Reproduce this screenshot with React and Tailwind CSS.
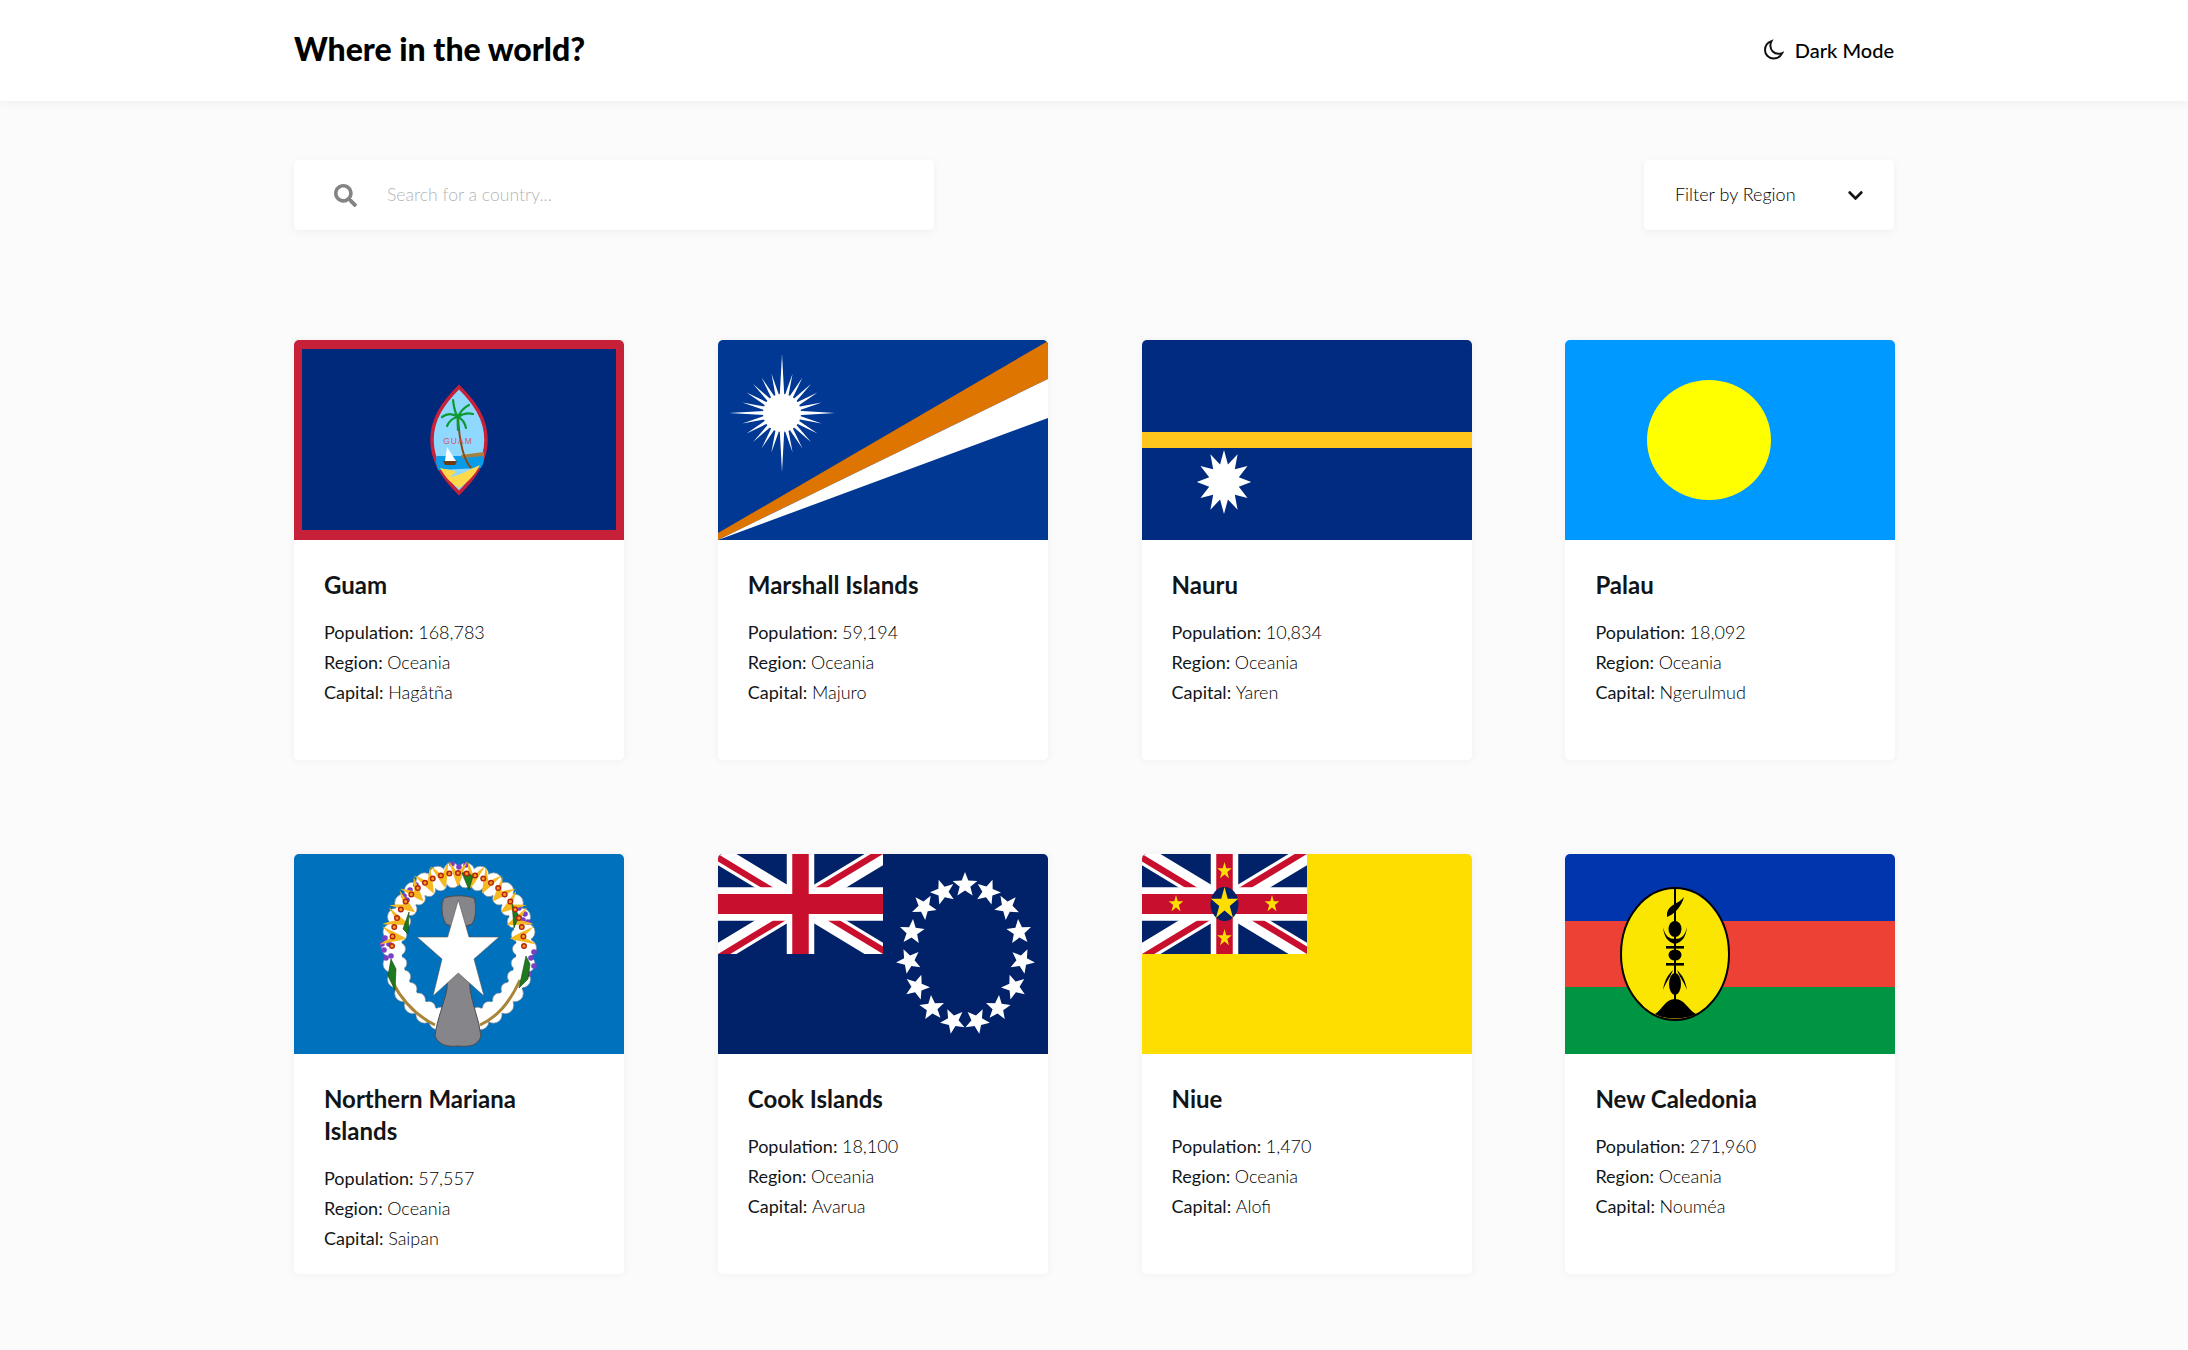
import { FaSearch, FaChevronDown } from 'react-icons/fa';

// star polygon helper: n points, outer/inner radius, optional x stretch
const starPoints = (cx, cy, n, outer, inner, sx = 1, sy = 1, rot = 0) => {
  const pts = [];
  for (let i = 0; i < n * 2; i++) {
    const r = i % 2 === 0 ? outer : inner;
    const a = (Math.PI * i) / n - Math.PI / 2 + rot;
    pts.push(`${(cx + Math.cos(a) * r * sx).toFixed(2)},${(cy + Math.sin(a) * r * sy).toFixed(2)}`);
  }
  return pts.join(' ');
};

const FlagSvg = ({ children }) => (
  <svg viewBox="0 0 330 200" preserveAspectRatio="none" className="block w-full h-[200px] rounded-t-[5px]">
    {children}
  </svg>
);

const Guam = () => (
  <FlagSvg>
    <rect width="330" height="200" fill="#C62139" />
    <rect x="8" y="9" width="314" height="181" fill="#00297B" />
    <path d="M165 47 C180 62 192 78 192 100 C192 122 180 138 165 153 C150 138 138 122 138 100 C138 78 150 62 165 47Z" fill="#8FD8FF" stroke="#C62139" strokeWidth="3.5" />
    <path d="M143 116 L190 116 C190 122 189 124 187 128 L144 130 C142 124 141 120 143 116Z" fill="#0A9BE8" />
    <path d="M167 115 L190 112 L190 116 L168 118Z" fill="#A6803F" />
    <path d="M146 128 C152 130 158 129 162 132 L156 137 C165 136 172 131 186 125 C181 135 174 142 165 148 C155 142 150 135 146 128Z" fill="#FDD94B" />
    <path d="M164 77 C165 95 168 118 177 128" fill="none" stroke="#8A4B12" strokeWidth="2" />
    <path d="M164 77 C160 72 160 66 159 60 M164 77 C167 70 171 67 175 65 M164 77 C170 73 175 73 179 74 M164 77 C158 73 152 74 148 77 M164 77 C159 78 155 81 153 86 M164 77 C168 79 171 83 172 88 M164 77 C163 81 164 85 164 90" fill="none" stroke="#0E9A30" strokeWidth="2.2" strokeLinecap="round" />
    <text x="164" y="104" textAnchor="middle" fontSize="8.5" fill="#D8546C" letterSpacing="1" fontFamily="Liberation Sans, sans-serif">GUAM</text>
    <path d="M153 107 L162 121 L151 121Z" fill="#fff" />
    <path d="M149 121 L163 121 L161 125 L151 125Z" fill="#6D3A12" />
  </FlagSvg>
);

const marshallRays = Array.from({ length: 24 }, (_, i) => i);

const Marshall = () => (
  <FlagSvg>
    <rect width="330" height="200" fill="#003893" />
    <path d="M0 193 L330 1 L330 39 L0 200Z" fill="#DD7500" />
    <path d="M0 200 L330 39 L330 78Z" fill="#fff" />
    {marshallRays.map((i) => {
      const a = (i * Math.PI) / 12;
      let len = 41;
      if (i === 0 || i === 12) len = 59;
      if (i === 6 || i === 18) len = 53;
      const w = 3.2;
      const cx = 64;
      const cy = 73;
      const tx = cx + Math.sin(a) * len;
      const ty = cy - Math.cos(a) * len;
      const bx = Math.cos(a) * w;
      const by = Math.sin(a) * w;
      return <polygon key={i} points={`${cx + bx},${cy + by} ${tx},${ty} ${cx - bx},${cy - by}`} fill="#fff" />;
    })}
    <circle cx="64" cy="73" r="19" fill="#fff" />
  </FlagSvg>
);

const Nauru = () => (
  <FlagSvg>
    <rect width="330" height="200" fill="#002B7F" />
    <rect y="92" width="330" height="16" fill="#FFC61E" />
    <polygon points={starPoints(82, 142, 12, 32, 18, 0.85, 1)} fill="#fff" />
  </FlagSvg>
);

const Palau = () => (
  <FlagSvg>
    <rect width="330" height="200" fill="#0099FF" />
    <ellipse cx="144" cy="100" rx="62" ry="60" fill="#FFFF00" />
  </FlagSvg>
);

const wreathDots = Array.from({ length: 30 }, (_, i) => i);
const beadDots = Array.from({ length: 25 }, (_, i) => i);
const petals = Array.from({ length: 13 }, (_, i) => i);

const Mariana = () => (
  <FlagSvg>
    <rect width="330" height="200" fill="#0071BC" />
    {/* white scalloped wreath */}
    {wreathDots.map((i) => {
      const a = (i / 30) * Math.PI * 2;
      return (
        <g key={i}>
          <circle cx={165 + Math.cos(a) * 69} cy={94 + Math.sin(a) * 77} r="8.5" fill="#fff" stroke="#8a949c" strokeWidth="0.7" />
          <circle cx={165 + Math.cos(a) * 60} cy={95 + Math.sin(a) * 68} r="6.5" fill="#fff" stroke="#8a949c" strokeWidth="0.7" />
        </g>
      );
    })}
    <ellipse cx="165" cy="94" rx="65" ry="73" fill="none" stroke="#fff" strokeWidth="15" />
    {/* rope along the bottom */}
    <path d="M99 129 C110 150 125 163 141 171 M226 126 C215 150 203 163 186 171" fill="none" stroke="#A9853A" strokeWidth="3" />
    {/* purple flowers */}
    {[[91, 84], [95, 90], [90, 96], [97, 102], [92, 104], [88, 90], [110, 42], [116, 36], [122, 31], [113, 46], [158, 10], [165, 13], [172, 11], [225, 54], [231, 60], [234, 68], [229, 66], [237, 104], [240, 112], [235, 120], [240, 98]].map(([x, y], i) => (
      <circle key={i} cx={x} cy={y} r="2.8" fill="#7B3FC4" />
    ))}
    {/* yellow petals */}
    {petals.map((i) => {
      const t = Math.PI * 1.04 + (i / 12) * Math.PI * 0.92;
      const x = 164 + Math.cos(t) * 66;
      const y = 92 + Math.sin(t) * 73;
      const deg = (t * 180) / Math.PI + 90;
      return (
        <path
          key={i}
          transform={`translate(${x} ${y}) rotate(${deg}) scale(1.15)`}
          d="M-8 -10 C-4 -6 -2 -2 0 0 C2 -2 4 -6 8 -10 C5 -2 3 6 0 12 C-3 6 -5 -2 -8 -10Z"
          fill="#F6B921"
        />
      );
    })}
    {/* leaves */}
    <path d="M97 105 L94 122 L101 136 L102 115Z M232 102 L225 134 L234 125 L236 110Z M115 58 L109 75 L114 80Z M218 50 L220 74 L225 62Z M168 19 L175 36 L179 22 L172 18Z" fill="#1E7A1E" stroke="#0E4A0E" strokeWidth="0.6" />
    {/* red beads */}
    {beadDots.map((i) => {
      const t = Math.PI + (i / 24) * Math.PI;
      return <circle key={i} cx={164 + Math.cos(t) * 66} cy={92 + Math.sin(t) * 73} r="2.3" fill="#F39A1E" stroke="#B3230F" strokeWidth="1.4" />;
    })}
    {/* latte stone */}
    <path d="M150 44 C147 50 147 62 152 70 L157 72 L155 85 L153 135 C150 150 143 165 141 182 C145 192 155 193 164 192 C175 193 184 192 187 182 C185 165 178 150 176 135 L174 85 L172 72 L178 70 C183 62 182 50 180 44 C170 41 160 41 150 44Z" fill="#86868A" stroke="#4d4d50" strokeWidth="1" />
    {/* star */}
    <polygon points="164.3,46 175,83 205,83 180,105 190,142 164.3,119 139,142 148,105 123,83 153.7,83" fill="#fff" stroke="#555" strokeWidth="0.6" />
  </FlagSvg>
);

// Union Jack, drawn in 60x30 units and stretched into the 165x100 canton
const UnionJack = ({ clipId }) => (
  <svg x="0" y="0" width="165" height="100" viewBox="0 0 60 30" preserveAspectRatio="none">
    <defs>
      <clipPath id={clipId}>
        <path d="M30 15 H60 V30 Z V30 H0 Z H0 V0 Z V0 H60 Z" />
      </clipPath>
    </defs>
    <rect width="60" height="30" fill="#012169" />
    <path d="M0 0 L60 30 M60 0 L0 30" stroke="#fff" strokeWidth="6" />
    <path d="M0 0 L60 30 M60 0 L0 30" stroke="#C8102E" strokeWidth="4" clipPath={`url(#${clipId})`} />
    <path d="M30 0 V30 M0 15 H60" stroke="#fff" strokeWidth="10" />
    <path d="M30 0 V30 M0 15 H60" stroke="#C8102E" strokeWidth="6" />
  </svg>
);

const cookStars = [
  [247, 31], [225, 38], [270, 38], [206, 53], [289, 53], [194, 78], [301, 78], [191, 107],
  [304, 107], [199, 133], [296, 133], [214, 154], [280, 154], [235, 167], [259, 167],
];

const Cook = () => (
  <FlagSvg>
    <rect width="330" height="200" fill="#012169" />
    <UnionJack clipId="cook-jack" />
    {cookStars.map(([x, y], i) => {
      const rot = Math.atan2(x - 247, 100 - y);
      return <polygon key={i} points={starPoints(x, y, 5, 13, 5.6, 1, 1, rot)} fill="#fff" />;
    })}
  </FlagSvg>
);

const Niue = () => (
  <FlagSvg>
    <rect width="330" height="200" fill="#FEDD00" />
    <UnionJack clipId="niue-jack" />
    <ellipse cx="82.5" cy="50" rx="14" ry="17" fill="#012169" />
    <polygon points={starPoints(82.5, 50, 5, 17, 6.5, 0.85, 1)} fill="#FEDD00" />
    {[[82.5, 17], [34, 50], [130, 50], [82.5, 84]].map(([x, y], i) => (
      <polygon key={i} points={starPoints(x, y, 5, 9, 3.5, 0.85, 1)} fill="#FEDD00" />
    ))}
  </FlagSvg>
);

const Caledonia = () => (
  <FlagSvg>
    <rect width="330" height="67" fill="#0035AD" />
    <rect y="67" width="330" height="67" fill="#ED4135" />
    <rect y="133" width="330" height="67" fill="#009543" />
    <ellipse cx="110" cy="100" rx="54" ry="66" fill="#FAE600" stroke="#000" strokeWidth="2" />
    {/* fleche faitiere */}
    <path d="M110 34 V150" stroke="#000" strokeWidth="2" />
    <path d="M119 43 C114 50 104 50 102 59 L102 63 C109 60 116 54 119 43Z" fill="#000" />
    <ellipse cx="110" cy="75" rx="6.5" ry="8" fill="#000" />
    <path d="M98 73 C100 82 104 85 110 85 C116 85 120 82 122 73 C121 82 118 88 110 90 C102 88 99 82 98 73Z" fill="#000" />
    <rect x="101" y="92" width="18" height="2.6" fill="#000" />
    <ellipse cx="110" cy="101" rx="6.5" ry="5.5" fill="#000" />
    <rect x="101" y="109" width="18" height="2.6" fill="#000" />
    <ellipse cx="110" cy="130" rx="6" ry="11" fill="#000" />
    <path d="M98 136 C100 124 104 120 108 116 C105 124 102 126 98 136Z M122 136 C120 124 116 120 112 116 C115 124 118 126 122 136Z" fill="#000" />
    <path d="M90 160 C98 155 100 145 110 145 C120 145 122 155 131 160 C122 166 98 166 90 160Z" fill="#000" />
  </FlagSvg>
);

const countries = [
  { name: 'Guam', population: '168,783', capital: 'Hagåtña', Flag: Guam },
  { name: 'Marshall Islands', population: '59,194', capital: 'Majuro', Flag: Marshall },
  { name: 'Nauru', population: '10,834', capital: 'Yaren', Flag: Nauru },
  { name: 'Palau', population: '18,092', capital: 'Ngerulmud', Flag: Palau },
  { name: 'Northern Mariana Islands', population: '57,557', capital: 'Saipan', Flag: Mariana },
  { name: 'Cook Islands', population: '18,100', capital: 'Avarua', Flag: Cook },
  { name: 'Niue', population: '1,470', capital: 'Alofi', Flag: Niue },
  { name: 'New Caledonia', population: '271,960', capital: 'Nouméa', Flag: Caledonia },
];

const Detail = ({ label, value }) => (
  <p className="h-[30px] leading-[30px] text-[18px] font-normal text-[#111517]">
    {label}: <span className="font-light text-black">{value}</span>
  </p>
);

const CountryCard = ({ country }) => {
  const { Flag } = country;
  return (
    <article className="w-[330px] h-[420px] bg-white rounded-[5px] shadow-[0_0_7px_2px_rgba(0,0,0,0.03)]">
      <Flag />
      <div className="pt-[29px] px-[30px] pb-5">
        <h2 className="text-[24px] leading-8 font-bold text-[#111517]">{country.name}</h2>
        <div className="mt-4">
          <Detail label="Population" value={country.population} />
          <Detail label="Region" value="Oceania" />
          <Detail label="Capital" value={country.capital} />
        </div>
      </div>
    </article>
  );
};

export default function App() {
  return (
    <div className="min-h-screen bg-[#fbfbfb] font-['Lato',sans-serif] text-[#111517]">
      <header className="h-[101px] bg-white shadow-[0_2px_9px_rgba(0,0,0,0.05)]">
        <div className="w-[1600px] h-full mx-auto flex items-center justify-between">
          <h1 className="text-[32px] font-black text-black pb-[3px]">Where in the world?</h1>
          <button className="flex items-center gap-[11px] text-[20px] font-medium text-black pb-[2px]">
            <svg width="20" height="21" viewBox="0 0 20 20" fill="none" stroke="#111" strokeWidth="2">
              <path d="M7.5 1.6 C3.8 3 1 6.3 1 10.4 C1 15.3 4.9 19 9.6 19 C13.4 19 16.6 16.8 18.2 13.6 C17 14.1 15.8 14.3 14.5 14.3 C10 14.3 6.4 10.8 6.4 6.2 C6.4 4.6 6.8 3 7.5 1.6Z" />
            </svg>
            Dark Mode
          </button>
        </div>
      </header>

      <main className="w-[1600px] mx-auto pt-[59px] pb-[76px]">
        <div className="flex justify-between">
          <label className="w-[640px] h-[70px] bg-white rounded-[5px] shadow-[0_2px_9px_rgba(0,0,0,0.05)] flex items-center pl-10">
            <FaSearch className="w-[23px] h-[23px] text-[#848484]" />
            <input
              placeholder="Search for a country..."
              className="ml-[30px] flex-1 outline-none text-[17.6px] font-light placeholder:text-[#b5b5b5]"
            />
          </label>
          <div className="w-[250px] h-[70px] bg-white rounded-[5px] shadow-[0_2px_9px_rgba(0,0,0,0.05)] flex items-center justify-between pl-[31px] pr-[30px]">
            <span className="text-[18px] font-light text-black pb-px">Filter by Region</span>
            <FaChevronDown className="w-[17px] h-[17px] text-[#111517]" />
          </div>
        </div>

        <div className="mt-[110px] grid grid-cols-[repeat(4,330px)] gap-x-[93.8px] gap-y-[94px]">
          {countries.map((country) => (
            <CountryCard key={country.name} country={country} />
          ))}
        </div>
      </main>
    </div>
  );
}
